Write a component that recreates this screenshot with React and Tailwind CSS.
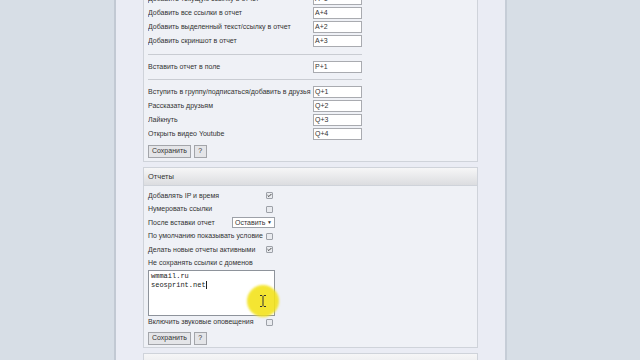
import { Check } from 'lucide-react';

const font = { fontFamily: '"Liberation Sans", Arial, sans-serif' };

const Field = ({ label, value }) => (
  <div className="flex items-center h-[14px]">
    <span className="w-[165px] text-[7px] text-[#333] whitespace-nowrap overflow-hidden">{label}</span>
    <div className="w-[49px] h-[12px] bg-white border border-[#a9abb0] text-[7px] text-[#333] leading-[10px] pl-[1px]">
      {value}
    </div>
  </div>
);

const Separator = ({ h }) => (
  <div className={`${h} flex items-center`}>
    <div className="w-[214px] h-px bg-[#c9ccd2]" />
  </div>
);

const Checkbox = ({ checked }) => (
  <div className="w-[7px] h-[7px] border border-[#9da1a8] bg-[#e9ebef] rounded-[1px] flex items-center justify-center">
    {checked && <Check size={7} strokeWidth={4} className="text-[#222]" />}
  </div>
);

const CheckRow = ({ label, checked }) => (
  <div className="flex items-center h-[13.5px]">
    <span className="w-[118px] text-[7px] text-[#333] whitespace-nowrap">{label}</span>
    <Checkbox checked={checked} />
  </div>
);

const Buttons = () => (
  <div className="flex items-center gap-[3px]">
    <button className="h-[13px] px-[3px] bg-[#e4e5e8] border border-[#a3a5aa] text-[7px] text-[#333]">Сохранить</button>
    <button className="h-[13px] w-[13px] bg-[#e4e5e8] border border-[#a3a5aa] text-[7px] text-[#333]">?</button>
  </div>
);

const App = () => {
  return (
    <div className="w-[640px] h-[360px] overflow-hidden flex bg-[#d7dee6]" style={font}>
      <div className="w-[114px] shrink-0" />
      <div className="w-[393px] shrink-0 h-full bg-[#eaecf4] border-l-2 border-[#c2c9d3] border-r-2 border-r-[#c6cdd7] pl-[27px]">
        {/* Hotkeys panel */}
        <div className="w-[335px] mt-[-13px] bg-[#eff1f6] border border-[#cfd3da] pl-[4px] pt-[4px] pb-[3px]">
          <Field label="Добавить текущую ссылку в отчет" value="A+1" />
          <Field label="Добавить все ссылки в отчет" value="A+4" />
          <Field label="Добавить выделенный текст/ссылку в отчет" value="A+2" />
          <Field label="Добавить скриншот в отчет" value="A+3" />
          <Separator h="h-[12px]" />
          <Field label="Вставить отчет в поле" value="P+1" />
          <Separator h="h-[11px]" />
          <Field label="Вступить в группу/подписаться/добавить в друзья" value="Q+1" />
          <Field label="Рассказать друзьям" value="Q+2" />
          <Field label="Лайкнуть" value="Q+3" />
          <Field label="Открыть видео Youtube" value="Q+4" />
          <div className="mt-[4px]">
            <Buttons />
          </div>
        </div>

        {/* Reports panel */}
        <div className="relative w-[335px] mt-[5px] bg-[#eff1f6] border border-[#cfd3da]">
          <div className="h-[18px] flex items-center pl-[4px] bg-gradient-to-b from-[#f6f6f7] to-[#dcdde0] border-b border-[#cfd3da] text-[7.5px] text-[#333]">
            Отчеты
          </div>
          <div className="pl-[4px] pt-[3px] pb-[2px]">
            <CheckRow label="Добавлять IP и время" checked />
            <CheckRow label="Нумеровать ссылки" />
            <div className="flex items-center h-[13.5px]">
              <span className="w-[84px] text-[7px] text-[#333] whitespace-nowrap">После вставки отчет</span>
              <div className="w-[43px] h-[11px] bg-white border border-[#9da1a8] flex items-center justify-between px-[2px] text-[7px] text-[#333]">
                <span>Оставить</span>
                <span className="text-[5px]">▼</span>
              </div>
            </div>
            <CheckRow label="По умолчанию показывать условие" />
            <CheckRow label="Делать новые отчеты активными" checked />
            <div className="h-[13px] flex items-center text-[7px] text-[#333]">Не сохранять ссылки с доменов</div>
            <div className="w-[127px] h-[46px] bg-white border border-[#8e939b] px-[2px] pt-[1px] text-[7px] leading-[9px] text-[#222]" style={{ fontFamily: '"Liberation Mono", "Courier New", monospace' }}>
              <div>wmmail.ru</div>
              <div>seosprint.net<span className="inline-block w-px h-[8px] bg-[#222] align-middle" /></div>
            </div>
            <CheckRow label="Включить звуковые оповещения" />
            <div className="mt-[3px]">
              <Buttons />
            </div>
          </div>
          {/* mouse highlight */}
          <div className="absolute left-[103px] top-[117px] w-[32px] h-[32px] rounded-full bg-[#f3e31c] opacity-90 blur-[1px]" />
          <svg className="absolute left-[115px] top-[127px]" width="8" height="12" viewBox="0 0 8 12">
            <path d="M1 0.5h2.2M4.8 0.5H7M4 1v10M1 11.5h2.2M4.8 11.5H7" stroke="#333" strokeWidth="1" fill="none" />
          </svg>
        </div>

        {/* Next panel */}
        <div className="w-[335px] mt-[5px] h-[20px] bg-gradient-to-b from-[#f6f6f7] to-[#e3e4e7] border border-[#cfd3da]" />
      </div>
    </div>
  );
};

export default App;
